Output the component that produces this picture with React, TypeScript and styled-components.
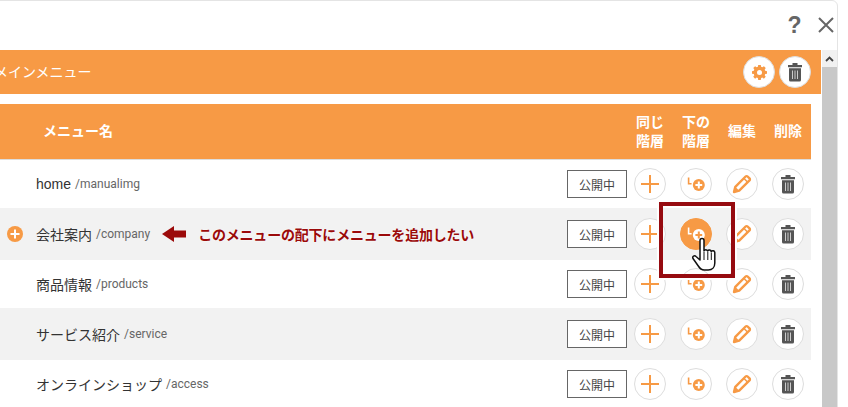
import React, { FC } from 'react';
import styled, { createGlobalStyle } from 'styled-components';

const GlobalStyle = createGlobalStyle`
	html, body {
		margin: 0;
		padding: 0;
		background: #ffffff;
	}
	body {
		font-family: "Liberation Sans", "Noto Sans CJK JP", sans-serif;
	}
`;

const ORANGE = '#f79a45';
const DARK = '#555555';

const Page = styled('div')`
	position: relative;
	width: 848px;
	height: 407px;
	overflow: hidden;
	background: #ffffff;
`;

const Dialog = styled('div')`
	display: flex;
	flex-direction: column;
	box-sizing: border-box;
	width: 858px;
	height: 420px;
	margin-left: -20px;
	border: 1px solid #e4e4e4;
	border-radius: 6px;
	background: #ffffff;
`;

const TopBar = styled('div')`
	display: flex;
	align-items: center;
	justify-content: flex-end;
	gap: 13px;
	box-sizing: border-box;
	height: 49px;
	padding: 0 2px 1px 0;
`;

const Help = styled('span')`
	width: 19px;
	font-size: 23px;
	font-weight: bold;
	line-height: 1;
	text-align: center;
	color: #666666;
`;

const CloseIcon = styled('svg')`
	display: block;
	width: 18px;
	height: 18px;
`;

const Body = styled('div')`
	display: flex;
	flex: 1;
	gap: 1px;
	min-height: 0;
`;

const Content = styled('div')`
	flex: 1;
	min-width: 0;
`;

const Scrollbar = styled('div')`
	display: flex;
	flex-direction: column;
	width: 15px;
	background: #c8c8c8;
`;

const ScrollUp = styled('div')`
	display: flex;
	align-items: center;
	justify-content: center;
	height: 17px;
	background: #f1f1f1;
`;

const MainBar = styled('div')`
	display: flex;
	align-items: center;
	justify-content: space-between;
	box-sizing: border-box;
	height: 44px;
	margin-bottom: 10px;
	padding: 0 10px 0 13px;
	background: ${ORANGE};
`;

const MainTitle = styled('span')`
	padding-bottom: 3px;
	font-family: "Noto Sans CJK JP", sans-serif;
	font-size: 14px;
	color: #ffffff;
`;

const BarActions = styled('div')`
	display: flex;
	gap: 4px;
`;

const Table = styled('div')`
	margin-right: 10px;
`;

const HeadRow = styled('div')`
	display: flex;
	align-items: center;
	box-sizing: border-box;
	height: 56px;
	border-bottom: 1px solid #dddddd;
	background: ${ORANGE};
`;

const HeadName = styled('div')`
	flex: 1;
	padding: 0 0 3px 62px;
	font-family: "Noto Sans CJK JP", sans-serif;
	font-size: 14px;
	font-weight: bold;
	color: #ffffff;
`;

const HeadCell = styled('div')`
	width: 46px;
	padding-bottom: 2px;
	font-family: "Noto Sans CJK JP", sans-serif;
	font-size: 14px;
	font-weight: bold;
	line-height: 19px;
	text-align: center;
	color: #ffffff;
`;

const Row = styled('div')<{ $shaded: boolean }>`
	display: flex;
	align-items: center;
	height: ${(p) => (p.$shaded ? 52 : 48)}px;
	background: ${(p) => (p.$shaded ? '#f2f2f2' : '#ffffff')};
`;

const AddSlot = styled('div')`
	display: flex;
	justify-content: center;
	box-sizing: border-box;
	width: 55px;
	padding-left: 13px;
`;

const Label = styled('div')`
	display: flex;
	flex: 1;
	align-items: center;
	min-width: 0;
`;

const Name = styled('span')`
	font-family: "Liberation Sans", "Noto Sans CJK JP", sans-serif;
	font-size: 14px;
	color: #333333;
`;

const Path = styled('span')`
	margin-left: 4px;
	font-family: "Roboto", "Liberation Sans", sans-serif;
	font-size: 12px;
	color: #666666;
`;

const Note = styled('span')`
	margin-left: 11px;
	font-family: "Noto Sans CJK JP", sans-serif;
	font-size: 14px;
	font-weight: bold;
	letter-spacing: -0.2px;
	color: #9b0a0a;
	text-shadow: 0 0 2px #ffffff;
	white-space: nowrap;
`;

const ArrowIcon = styled('svg')`
	display: block;
	width: 26px;
	height: 18px;
	margin-left: 11px;
`;

const Status = styled('button')`
	box-sizing: border-box;
	width: 60px;
	height: 28px;
	margin: 0;
	padding: 0;
	border: 1px solid #666666;
	background: #ffffff;
	font-family: "Noto Sans CJK JP", sans-serif;
	font-size: 12px;
	color: #444444;
`;

const ActionCell = styled('div')`
	display: flex;
	justify-content: center;
	width: 46px;
`;

const RoundButton = styled('button')<{ $active?: boolean }>`
	display: flex;
	align-items: center;
	justify-content: center;
	box-sizing: border-box;
	width: 32px;
	height: 32px;
	margin: 0;
	padding: 0;
	border: 1px solid ${(p) => (p.$active ? ORANGE : '#dddddd')};
	border-radius: 50%;
	background: ${(p) => (p.$active ? ORANGE : '#ffffff')};
`;

const Highlight = styled('div')`
	position: absolute;
	left: 659px;
	top: 202px;
	box-sizing: border-box;
	width: 76px;
	height: 76px;
	border: 4px solid #960b10;
	box-shadow: 0 0 0 2px #ffffff;
	pointer-events: none;
`;

const Cursor = styled('svg')`
	position: absolute;
	left: 691px;
	top: 237px;
	width: 28px;
	height: 36px;
	pointer-events: none;
`;

const Icon = styled('svg')`
	display: block;
`;

const PlusIcon: FC = () => (
	<Icon width="20" height="20" viewBox="0 0 20 20">
		<path d="M10 1v18M1 10h18" stroke={ORANGE} strokeWidth="2" fill="none" />
	</Icon>
);

const ChildIcon: FC<{ active?: boolean }> = ({ active }) => {
	const main = active ? '#ffffff' : ORANGE;
	const inner = active ? ORANGE : '#ffffff';
	return (
		<Icon width="20" height="16" viewBox="0 0 20 16">
			<path d="M2.6 1.5v6.2H5.6" stroke={main} strokeWidth="1.6" fill="none" />
			<circle cx="12.8" cy="9" r="6" fill={main} />
			<path d="M12.8 5.6v6.8M9.4 9h6.8" stroke={inner} strokeWidth="2" fill="none" />
		</Icon>
	);
};

const PencilIcon: FC = () => (
	<Icon width="20" height="20" viewBox="0 0 20 20">
		<path
			d="M2 18l1.3-5.2L13.6 2.5a1.4 1.4 0 0 1 2 0l1.9 1.9a1.4 1.4 0 0 1 0 2L7.2 16.7z"
			stroke={ORANGE}
			strokeWidth="2.4"
			strokeLinejoin="round"
			fill="none"
		/>
		<path d="M2 18l1.3-5.2 3.9 3.9z" fill={ORANGE} />
		<path d="M12 4.5l3.5 3.5" stroke={ORANGE} strokeWidth="1.6" fill="none" />
	</Icon>
);

const TrashIcon: FC = () => (
	<Icon width="16" height="20" viewBox="0 0 16 20">
		<path d="M5.5 1h5v2H15v2.2H1V3h4.5z" fill={DARK} />
		<path d="M2 6.2h12V18a1.5 1.5 0 0 1-1.5 1.5h-9A1.5 1.5 0 0 1 2 18z" fill={DARK} />
		<path d="M5.5 8.5v8.5M8 8.5v8.5M10.5 8.5v8.5" stroke="#ffffff" strokeWidth="1" opacity="0.7" />
	</Icon>
);

const GearIcon: FC = () => (
	<Icon width="15" height="15" viewBox="0 0 18 18">
		<path
			d="M7.3 0h3.4l.5 2.5 1.6.7 2.1-1.4 2.4 2.4-1.4 2.1.7 1.6 2.4.4v3.4l-2.4.5-.7 1.6 1.4 2.1-2.4 2.4-2.1-1.4-1.6.7-.5 2.4H7.3l-.5-2.4-1.6-.7-2.1 1.4-2.4-2.4 1.4-2.1-.7-1.6L-1 11.7V8.3l2.4-.5.7-1.6L.7 4.2l2.4-2.4 2.1 1.4 1.6-.7z"
			transform="translate(.9 -.1) scale(.9)"
			fill={ORANGE}
		/>
		<circle cx="9" cy="8.9" r="3" fill="#ffffff" />
	</Icon>
);

const MiniPlus: FC = () => (
	<Icon width="16" height="16" viewBox="0 0 16 16">
		<circle cx="8" cy="8" r="8" fill={ORANGE} />
		<path d="M8 3.5v9M3.5 8h9" stroke="#ffffff" strokeWidth="2" fill="none" />
	</Icon>
);

const rows = [
	{ name: 'home', path: '/manualimg' },
	{ name: '会社案内', path: '/company', marked: true },
	{ name: '商品情報', path: '/products' },
	{ name: 'サービス紹介', path: '/service' },
	{ name: 'オンラインショップ', path: '/access' },
];

const App: FC = () => (
	<Page>
		<GlobalStyle />
		<Dialog>
			<TopBar>
				<Help>?</Help>
				<CloseIcon viewBox="0 0 18 18">
					<path d="M2 2l14 14M16 2L2 16" stroke="#666666" strokeWidth="2" fill="none" />
				</CloseIcon>
			</TopBar>
			<Body>
				<Content>
					<MainBar>
						<MainTitle>メインメニュー</MainTitle>
						<BarActions>
							<RoundButton>
								<GearIcon />
							</RoundButton>
							<RoundButton>
								<TrashIcon />
							</RoundButton>
						</BarActions>
					</MainBar>
					<Table>
						<HeadRow>
							<HeadName>メニュー名</HeadName>
							<HeadCell>
								同じ
								<br />
								階層
							</HeadCell>
							<HeadCell>
								下の
								<br />
								階層
							</HeadCell>
							<HeadCell>編集</HeadCell>
							<HeadCell>削除</HeadCell>
						</HeadRow>
						{rows.map((row, i) => (
							<Row key={row.path} $shaded={i % 2 === 1}>
								<AddSlot>{row.marked && <MiniPlus />}</AddSlot>
								<Label>
									<Name>{row.name}</Name>
									<Path>{row.path}</Path>
									{row.marked && (
										<>
											<ArrowIcon viewBox="0 0 26 18">
												<path d="M1 9l12-8v4.5h12v7H13V17z" fill="#9b0a0a" />
											</ArrowIcon>
											<Note>このメニューの配下にメニューを追加したい</Note>
										</>
									)}
								</Label>
								<Status>公開中</Status>
								<ActionCell>
									<RoundButton>
										<PlusIcon />
									</RoundButton>
								</ActionCell>
								<ActionCell>
									<RoundButton $active={row.marked}>
										<ChildIcon active={row.marked} />
									</RoundButton>
								</ActionCell>
								<ActionCell>
									<RoundButton>
										<PencilIcon />
									</RoundButton>
								</ActionCell>
								<ActionCell>
									<RoundButton>
										<TrashIcon />
									</RoundButton>
								</ActionCell>
							</Row>
						))}
					</Table>
				</Content>
				<Scrollbar>
					<ScrollUp>
						<svg width="9" height="6" viewBox="0 0 9 6">
							<path d="M1 5l3.5-3.5L8 5" stroke="#444444" strokeWidth="1.8" fill="none" />
						</svg>
					</ScrollUp>
				</Scrollbar>
			</Body>
		</Dialog>
		<Highlight />
		<Cursor viewBox="0 0 28 36">
			<path
				d="M9 3.5a2 2 0 0 1 4 0V14a2 2 0 0 1 3.6 0 2 2 0 0 1 3.6.5 2 2 0 0 1 3.6 1V26c0 4-2.5 7-6.5 7h-4c-3 0-4.5-1.5-6-4L2 21.5c-1-2 1.5-3.5 3-2L9 23z"
				fill="#ffffff"
				stroke="#111111"
				strokeWidth="1.5"
				strokeLinejoin="round"
			/>
			<path d="M13 15v8M16.8 15v8M20.3 15.5V23" stroke="#111111" strokeWidth="1" fill="none" />
		</Cursor>
	</Page>
);

export default App;
